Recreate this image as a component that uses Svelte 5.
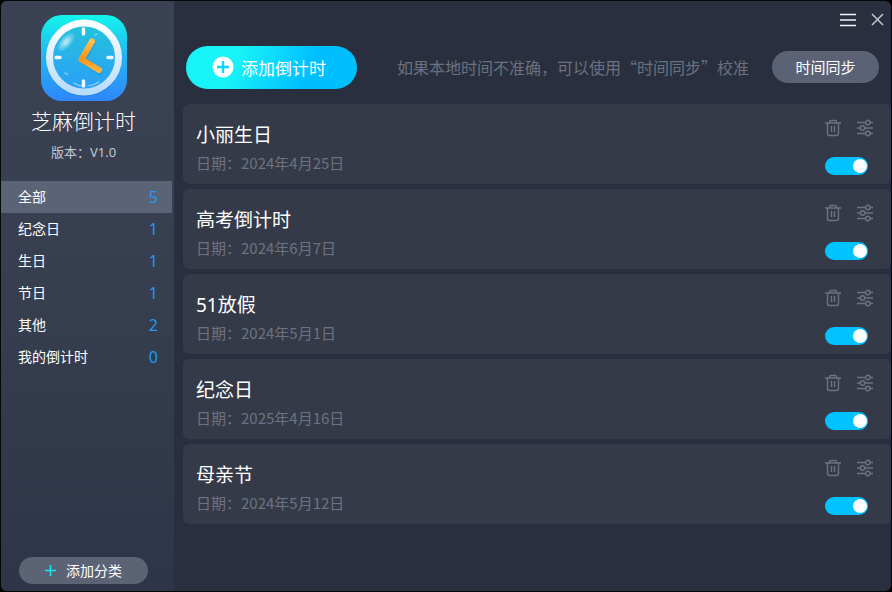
<script lang="ts">
	interface Category {
		name: string;
		count: number;
	}

	interface Countdown {
		title: string;
		date: string;
		enabled: boolean;
	}

	const categories: Category[] = [
		{ name: '全部', count: 5 },
		{ name: '纪念日', count: 1 },
		{ name: '生日', count: 1 },
		{ name: '节日', count: 1 },
		{ name: '其他', count: 2 },
		{ name: '我的倒计时', count: 0 }
	];

	let countdowns = $state<Countdown[]>([
		{ title: '小丽生日', date: '2024年4月25日', enabled: true },
		{ title: '高考倒计时', date: '2024年6月7日', enabled: true },
		{ title: '51放假', date: '2024年5月1日', enabled: true },
		{ title: '纪念日', date: '2025年4月16日', enabled: true },
		{ title: '母亲节', date: '2024年5月12日', enabled: true }
	]);

	let active = $state(0);

	function remove(index: number) {
		countdowns.splice(index, 1);
	}
</script>

<div class="window" lang="zh-CN">
	<aside class="sidebar">
		<div class="brand">
			<svg class="logo" width="86" height="86" viewBox="0 0 86 86" aria-hidden="true">
				<defs>
					<linearGradient id="tile" x1="0" y1="0" x2="0" y2="1">
						<stop offset="0" stop-color="#12f5ea" />
						<stop offset="0.45" stop-color="#22b8f2" />
						<stop offset="1" stop-color="#2f86fb" />
					</linearGradient>
					<linearGradient id="face" x1="0" y1="0" x2="0" y2="1">
						<stop offset="0" stop-color="#25c3dc" />
						<stop offset="1" stop-color="#2a9ef8" />
					</linearGradient>
					<linearGradient id="ring" x1="0" y1="0" x2="0" y2="1">
						<stop offset="0" stop-color="#ffffff" />
						<stop offset="1" stop-color="#b9dcfc" />
					</linearGradient>
					<linearGradient id="hands" x1="0" y1="0" x2="0" y2="1">
						<stop offset="0" stop-color="#ffc24d" />
						<stop offset="0.6" stop-color="#f7941d" />
						<stop offset="1" stop-color="#ffb33c" />
					</linearGradient>
					<radialGradient id="shine">
						<stop offset="0" stop-color="#fff" stop-opacity="0.75" />
						<stop offset="1" stop-color="#fff" stop-opacity="0" />
					</radialGradient>
				</defs>
				<rect width="86" height="86" rx="21" fill="url(#tile)" />
				<circle cx="43" cy="44" r="38" fill="#1670c8" opacity="0.25" />
				<circle cx="43" cy="42.5" r="34.5" fill="url(#face)" stroke="url(#ring)" stroke-width="7" />
				<ellipse cx="25" cy="27" rx="6" ry="12" fill="url(#shine)" transform="rotate(42 25 27)" />
				<path d="M24 58l2.500 1.500M33 68q4 3 9 3M47 71q6-1 11-4M54 20l2-1" fill="none" stroke="#fff" stroke-width="1.2" stroke-linecap="round" opacity="0.5" />
				<path d="M42.500 14v5M42.500 66v5M15 42.500h4M67 42.500h4" stroke="#eefaff" stroke-width="3.500" stroke-linecap="round" />
				<path d="M52 28L42 46L59 57" fill="none" stroke="#1c78b8" stroke-width="6" stroke-linecap="round" stroke-linejoin="round" opacity="0.25" />
				<path d="M51 26.500L40.500 44.500L58 55" fill="none" stroke="url(#hands)" stroke-width="6" stroke-linecap="round" stroke-linejoin="round" />
			</svg>
			<h1>芝麻倒计时</h1>
			<p class="version">版本：V1.0</p>
		</div>

		<nav class="categories">
			{#each categories as category, i}
				<button class="category" class:active={active === i} onclick={() => (active = i)}>
					<span>{category.name}</span>
					<span class="count">{category.count}</span>
				</button>
			{/each}
		</nav>

		<button class="add-category">
			<svg width="11" height="11" viewBox="0 0 11 11" aria-hidden="true">
				<path d="M5.500 0v11M0 5.500h11" stroke="#12e6f5" stroke-width="1.6" />
			</svg>
			添加分类
		</button>
	</aside>

	<main class="main">
		<div class="titlebar">
			<button class="icon-btn" aria-label="菜单">
				<svg width="16" height="14" viewBox="0 0 16 14">
					<path d="M0 1.500h16M0 7h16M0 12.500h16" stroke="#f2f4f7" stroke-width="1.4" />
				</svg>
			</button>
			<button class="icon-btn" aria-label="关闭">
				<svg width="13" height="13" viewBox="0 0 13 13">
					<path d="M1 1l11 11M12 1L1 12" stroke="#c3c7cf" stroke-width="1.5" />
				</svg>
			</button>
		</div>

		<div class="toolbar">
			<button class="add">
				<svg width="22" height="22" viewBox="0 0 22 22" aria-hidden="true">
					<circle cx="11" cy="11" r="10.5" fill="#fff" />
					<path d="M11 5v12M5 11h12" stroke="#10d4fc" stroke-width="2.4" />
				</svg>
				添加倒计时
			</button>
			<p class="hint">如果本地时间不准确，可以使用“时间同步”校准</p>
			<button class="sync">时间同步</button>
		</div>

		<ul class="list">
			{#each countdowns as item, i}
				<li class="card">
					<div class="info">
						<h2>{item.title}</h2>
						<p>日期：{item.date}</p>
					</div>
					<div class="controls">
						<div class="actions">
							<button class="icon-btn" aria-label="删除" onclick={() => remove(i)}>
								<svg width="16" height="18" viewBox="0 0 16 18" fill="none" stroke="currentColor" stroke-width="1.4">
									<path d="M0 4h16M4.500 4V3q0-1.500 1.500-1.500h4q1.500 0 1.500 1.500v1M2.500 4V14.500q0 2 2 2h7q2 0 2-2V4M6.500 7v6M9.500 7v6" />
								</svg>
							</button>
							<button class="icon-btn" aria-label="设置">
								<svg width="16" height="18" viewBox="0 0 16 18" fill="none" stroke="currentColor" stroke-width="1.4">
									<path d="M0 3.500h8.500M13 3.500H16M0 9h3M8 9h8M0 14.500h8.500M13 14.500H16" />
									<circle cx="10.800" cy="3.500" r="2.2" />
									<circle cx="5.500" cy="9" r="2.2" />
									<circle cx="10.800" cy="14.500" r="2.2" />
								</svg>
							</button>
						</div>
						<input class="switch" type="checkbox" role="switch" aria-label={item.title} bind:checked={item.enabled} />
					</div>
				</li>
			{/each}
		</ul>
	</main>
</div>

<style>
	:global(body) {
		background: #000;
	}

	.window {
		box-sizing: border-box;
		display: flex;
		min-height: 100vh;
		border: 1px solid #05070b;
		border-radius: 7px;
		overflow: hidden;
		background: #292f3e;
		color: #fff;
		font-family: 'Noto Sans', 'Noto Sans CJK SC', sans-serif;
	}

	button {
		padding: 0;
		border: none;
		background: none;
		color: inherit;
		font: inherit;
		cursor: pointer;
	}

	h1,
	h2,
	p,
	ul {
		margin: 0;
		padding: 0;
		font-weight: 400;
	}

	svg {
		display: block;
	}

	.sidebar {
		flex: 0 0 173px;
		display: flex;
		flex-direction: column;
		background: linear-gradient(#3b4254, #363e4f 50%, #2f3548);
	}

	.brand {
		display: flex;
		flex-direction: column;
		align-items: center;
		height: 166px;
		padding: 14px 8px 0 0;
	}

	h1 {
		margin-top: 5px;
		font-size: 21px;
		font-weight: 300;
		line-height: 30px;
	}

	.version {
		margin-top: 6px;
		font-size: 13px;
		line-height: 20px;
		color: #c3c7ce;
	}

	.categories {
		display: flex;
		flex-direction: column;
		padding-right: 2px;
	}

	.category {
		display: flex;
		align-items: center;
		justify-content: space-between;
		height: 32px;
		padding: 0 14px 0 17px;
		font-size: 14px;
		line-height: 32px;
	}

	.category.active {
		background: #5b6477;
	}

	.count {
		font-size: 16px;
		color: #1e9bf5;
	}

	.add-category {
		display: flex;
		align-items: center;
		justify-content: center;
		gap: 10px;
		height: 27px;
		margin: auto 26px 7px 18px;
		border-radius: 14px;
		background: #5b6375;
		font-size: 14px;
		line-height: 27px;
	}

	.main {
		flex: 1;
		min-width: 0;
	}

	.titlebar {
		display: flex;
		align-items: center;
		justify-content: flex-end;
		gap: 15px;
		height: 37px;
		padding-right: 7px;
	}

	.toolbar {
		display: flex;
		align-items: center;
		height: 58px;
		padding: 0 12px;
	}

	.add {
		display: flex;
		align-items: center;
		gap: 7px;
		width: 171px;
		height: 43px;
		padding-left: 26px;
		border-radius: 22px;
		background: linear-gradient(115deg, #17f3f8 30%, #00bfff 70%);
		font-size: 17px;
	}

	.hint {
		flex: 1;
		margin-right: 23px;
		text-align: right;
		font-family: 'Noto Sans CJK SC', sans-serif;
		font-size: 16px;
		line-height: 22px;
		white-space: nowrap;
		color: #6b7180;
	}

	.sync {
		width: 107px;
		height: 32px;
		border-radius: 16px;
		background: #5b6276;
		font-size: 15px;
		line-height: 32px;
	}

	.list {
		display: grid;
		gap: 5px;
		padding: 8px 0 20px 9px;
		list-style: none;
	}

	.card {
		display: flex;
		justify-content: space-between;
		box-sizing: border-box;
		height: 80px;
		padding: 15px 18px 0 13px;
		border-radius: 6px;
		background: #353a48;
	}

	.info h2 {
		font-size: 19px;
		line-height: 32px;
	}

	.info p {
		font-family: 'Noto Sans CJK SC', sans-serif;
		font-size: 15px;
		line-height: 24px;
		color: #6d7280;
	}

	.controls {
		display: flex;
		flex-direction: column;
		gap: 20px;
		color: #6d7382;
	}

	.actions {
		display: flex;
		gap: 16px;
	}

	.switch {
		appearance: none;
		display: flex;
		align-items: center;
		box-sizing: border-box;
		width: 43px;
		height: 18px;
		margin: 0;
		padding: 0 1px;
		border-radius: 9px;
		background: #5b6276;
		cursor: pointer;
	}

	.switch::before {
		content: '';
		width: 14px;
		height: 14px;
		border-radius: 50%;
		background: #fff;
	}

	.switch:checked {
		justify-content: flex-end;
		background: #00c3ff;
	}
</style>
